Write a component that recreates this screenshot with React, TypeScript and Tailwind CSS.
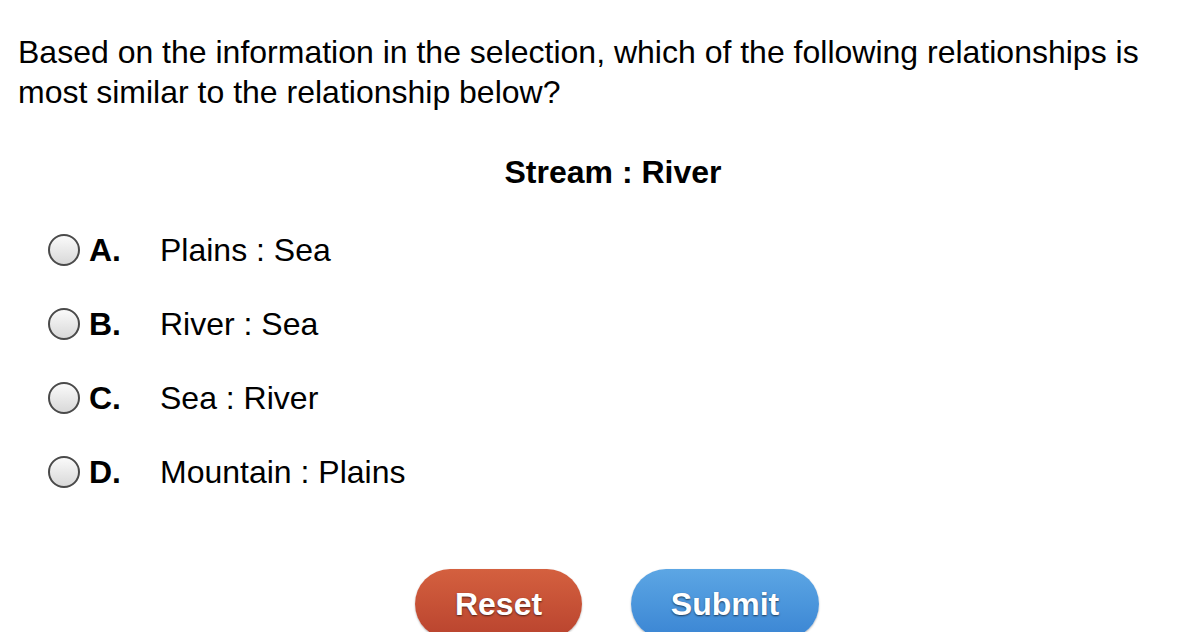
const options = [
  { letter: 'A.', text: 'Plains : Sea' },
  { letter: 'B.', text: 'River : Sea' },
  { letter: 'C.', text: 'Sea : River' },
  { letter: 'D.', text: 'Mountain : Plains' },
]

export default function App() {
  return (
    <main className="min-h-screen overflow-hidden bg-white px-[18px] pt-[32px] font-['Liberation_Sans',Arial,sans-serif] text-black">
      <p className="text-[32px] leading-[40px]">
        Based on the information in the selection, which of the following relationships is most similar to the relationship below?
      </p>

      <h2 className="mt-[40px] pl-[40px] text-center text-[32px] font-bold leading-[40px]">Stream : River</h2>

      <ul className="mt-[21px]">
        {options.map((o) => (
          <li key={o.letter} className="flex h-[74px] items-center pl-[30px]">
            <span className="h-[32px] w-[32px] shrink-0 rounded-full border-2 border-[#4a4a4a] bg-gradient-to-b from-[#fafafa] to-[#d9d9d9]" />
            <span className="ml-[9px] w-[71px] text-[32px] font-bold">{o.letter}</span>
            <span className="text-[32px]">{o.text}</span>
          </li>
        ))}
      </ul>

      <div className="mt-[60px] flex justify-center gap-[49px] pl-[48px]">
        <button className="h-[70px] w-[167px] rounded-full bg-gradient-to-b from-[#d4603f] to-[#b9432e] text-[32px] font-bold text-white shadow-[0_1px_2px_rgba(0,0,0,0.3)] [text-shadow:0_1px_2px_rgba(0,0,0,0.6)]">
          Reset
        </button>
        <button className="h-[70px] w-[188px] rounded-full bg-gradient-to-b from-[#5ca6e4] to-[#3a85d3] text-[32px] font-bold text-white shadow-[0_1px_2px_rgba(0,0,0,0.3)] [text-shadow:0_1px_2px_rgba(0,0,0,0.6)]">
          Submit
        </button>
      </div>
    </main>
  )
}
